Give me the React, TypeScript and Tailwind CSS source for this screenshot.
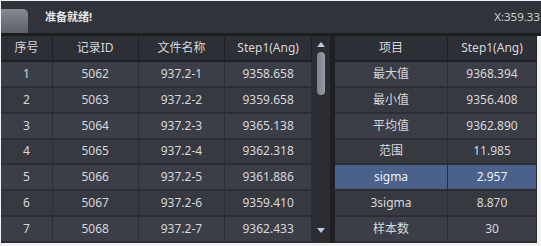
const rows = [
  ["1", "5062", "937.2-1", "9358.658"],
  ["2", "5063", "937.2-2", "9359.658"],
  ["3", "5064", "937.2-3", "9365.138"],
  ["4", "5065", "937.2-4", "9362.318"],
  ["5", "5066", "937.2-5", "9361.886"],
  ["6", "5067", "937.2-6", "9359.410"],
  ["7", "5068", "937.2-7", "9362.433"],
];

const stats = [
  ["最大值", "9368.394"],
  ["最小值", "9356.408"],
  ["平均值", "9362.890"],
  ["范围", "11.985"],
  ["sigma", "2.957"],
  ["3sigma", "8.870"],
  ["样本数", "30"],
];

const leftCols = ["w-[52px]", "w-[86px]", "w-[87px]", "w-[87px]"];
const rightCols = ["w-[113px]", "w-[89px]"];

export default function App() {
  return (
    <div
      className="flex h-[246px] w-[541px] flex-col overflow-hidden bg-[#f2f2f2] pt-[1px] pl-[1px] text-[12px] text-[#d6d8dc]"
      style={{ fontFamily: '"Noto Sans", "Noto Sans CJK SC", sans-serif' }}
    >
      {/* status bar */}
      <div className="flex h-[32px] items-center bg-[#30333a]">
        <div className="h-[24px] w-[27px] self-end rounded-tr-[5px] bg-gradient-to-b from-[#858990] to-[#5d6067]" />
        <span className="ml-[17px] text-[11px] font-bold text-[#e4e5e8]">准备就绪!</span>
        <span className="ml-auto mr-[1px] text-[11.5px] text-[#cfd1d5]">X:359.33</span>
      </div>
      <div className="h-[3px] bg-[#1b1d21]" />

      <div className="flex h-[207px] pr-[4px]">
        {/* left table */}
        <div className="flex w-[311px] flex-col bg-[#2a2c31]">
          <div className="flex h-[26px] border-b-[2px] border-[#1f2125] bg-[#2c2f35]">
            {["序号", "记录ID", "文件名称", "Step1(Ang)"].map((h, i) => (
              <div
                key={h}
                className={`${leftCols[i]} flex items-center justify-center border-r border-[#1f2125]`}
              >
                {h}
              </div>
            ))}
          </div>
          {rows.map((r, ri) => (
            <div
              key={r[0]}
              className={`flex h-[26px] border-b-[2px] border-[#2b2d32] ${
                ri % 2 === 0 ? "bg-[#3b3e46]" : "bg-[#363940]"
              }`}
            >
              {r.map((c, i) => (
                <div
                  key={i}
                  className={`${leftCols[i]} flex items-center justify-center border-r border-[#2b2d32]`}
                >
                  {c}
                </div>
              ))}
            </div>
          ))}
        </div>

        {/* scrollbar */}
        <div className="flex w-[19px] flex-col items-center bg-[#2b2d33]">
          <div className="mt-[6px] h-0 w-0 border-x-[4px] border-b-[5px] border-x-transparent border-b-[#b8cbe6]" />
          <div className="mt-[5px] h-[43px] w-[8px] rounded-full bg-gradient-to-r from-[#7d8089] to-[#9a9da5]" />
          <div className="mt-auto mb-[10px] h-0 w-0 border-x-[4px] border-t-[5px] border-x-transparent border-t-[#b8cbe6]" />
        </div>
        <div className="w-[5px] bg-[#1e2024]" />

        {/* right table */}
        <div className="flex w-[202px] flex-col bg-[#2a2c31]">
          <div className="flex h-[26px] border-b-[2px] border-[#1f2125] bg-[#2c2f35]">
            {["项目", "Step1(Ang)"].map((h, i) => (
              <div
                key={h}
                className={`${rightCols[i]} flex items-center justify-center border-r border-[#1f2125]`}
              >
                {h}
              </div>
            ))}
          </div>
          {stats.map((r, ri) => {
            const sel = r[0] === "sigma";
            return (
              <div
                key={r[0]}
                className={`flex h-[26px] border-b-[2px] border-[#2b2d32] ${
                  sel ? "bg-[#4a6189] text-[#eef1f6]" : ri % 2 === 0 ? "bg-[#3b3e46]" : "bg-[#363940]"
                }`}
              >
                {r.map((c, i) => (
                  <div
                    key={i}
                    className={`${rightCols[i]} flex items-center justify-center border-r border-[#2b2d32]`}
                  >
                    {c}
                  </div>
                ))}
              </div>
            );
          })}
        </div>
      </div>
    </div>
  );
}
